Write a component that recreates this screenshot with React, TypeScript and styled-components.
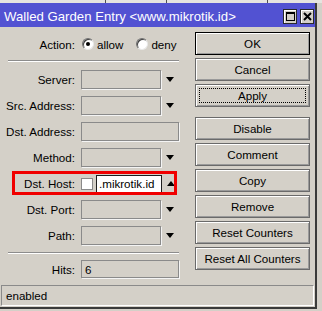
import React from "react";
import styled, { createGlobalStyle } from "styled-components";

const Global = createGlobalStyle`
  html, body { margin: 0; padding: 0; background: #d4d0c8; }
  #root { width: 322px; height: 311px; }
`;

const Page = styled.div`
  width: 322px;
  height: 311px;
  background: #d4d0c8;
  display: flex;
  flex-direction: column;
  overflow: hidden;
  font-family: "Liberation Sans", Arial, sans-serif;
  font-size: 11.6px;
  color: #000;
`;

const TopStrip = styled.div`
  height: 3px;
  display: flex;
  background: #e6e4e0;
`;

const StripCell = styled.div<{ $w: number }>`
  width: ${(p) => p.$w}px;
  border-right: 1px solid #505050;
  box-sizing: border-box;
`;

const Window = styled.div`
  width: 317px;
  height: 306px;
  box-sizing: border-box;
  border-right: 2px solid #3a3a3a;
  border-bottom: 2px solid #3a3a3a;
  display: flex;
  flex-direction: column;
`;

const TitleBar = styled.div`
  height: 24px;
  box-sizing: border-box;
  padding: 3px 1px 0 4px;
  background: #5252d2;
  color: #fff;
  font-size: 13.2px;
  display: flex;
  align-items: center;
  white-space: nowrap;
`;

const TitleText = styled.span`
  flex: 1;
`;

const TitleButtons = styled.div`
  display: flex;
  gap: 3px;
  align-self: flex-end;
  margin-bottom: 3px;
`;

const TitleButton = styled.div`
  width: 14px;
  height: 15px;
  box-sizing: border-box;
  background: #d4d0c8;
  border: 1px solid #2a2a2a;
  box-shadow: inset 1px 1px 0 #fff;
  display: flex;
  align-items: center;
  justify-content: center;
`;

const MaxGlyph = styled.div`
  width: 9px;
  height: 9px;
  box-sizing: border-box;
  border: 1px solid #000;
  border-top-width: 2px;
`;

const Body = styled.div`
  flex: 1;
  display: flex;
  flex-direction: column;
`;

const Main = styled.div`
  display: flex;
  padding-top: 5px;
`;

const Form = styled.div`
  width: 180px;
  display: flex;
  flex-direction: column;
`;

const Row = styled.div<{ $h?: number }>`
  position: relative;
  display: grid;
  grid-template-columns: 75px auto;
  column-gap: 6px;
  align-items: center;
  height: ${(p) => p.$h ?? 19}px;
`;

const Label = styled.span`
  text-align: right;
  white-space: nowrap;
`;

const Controls = styled.div`
  display: flex;
  align-items: center;
`;

const Radio = styled.span<{ $on?: boolean; $gap?: number }>`
  width: 12px;
  height: 12px;
  box-sizing: border-box;
  border-radius: 50%;
  background: #fff;
  border: 1px solid;
  border-color: #707070 #e8e8e8 #e8e8e8 #707070;
  box-shadow: inset 1px 1px 0 #404040;
  margin-left: ${(p) => p.$gap ?? 1}px;
  margin-right: 3px;
  display: flex;
  align-items: center;
  justify-content: center;
  &::after {
    content: "";
    width: 4px;
    height: 4px;
    border-radius: 50%;
    background: ${(p) => (p.$on ? "#000" : "transparent")};
  }
`;

const Separator = styled.div<{ $top: number; $bottom: number }>`
  margin: ${(p) => p.$top}px 0 ${(p) => p.$bottom}px 8px;
  width: 171px;
  border-top: 1px solid #8c8c8c;
  border-bottom: 1px solid #fff;
`;

const Rows = styled.div`
  display: flex;
  flex-direction: column;
  gap: 7px;
`;

const Field = styled.div<{ $w: number; $h?: number }>`
  width: ${(p) => p.$w}px;
  height: ${(p) => p.$h ?? 19}px;
  box-sizing: border-box;
  border: 1px solid #8a8a8a;
  box-shadow: 1px 1px 0 #f4f4f4;
  padding-left: 3px;
  display: flex;
  align-items: center;
`;

const Arrow = styled.span<{ $up?: boolean }>`
  width: 0;
  height: 0;
  margin-left: 5px;
  border-left: 4.5px solid transparent;
  border-right: 4.5px solid transparent;
  ${(p) =>
    p.$up ? "border-bottom: 5px solid #000;" : "border-top: 5px solid #000;"}
`;

const Check = styled.span`
  width: 12px;
  height: 12px;
  box-sizing: border-box;
  background: #fff;
  border: 1px solid #8a8a8a;
`;

const TextInput = styled.div`
  width: 66px;
  height: 18px;
  box-sizing: border-box;
  margin-left: 3px;
  background: #fff;
  border: 1px solid #1e1e1e;
  padding-left: 2px;
  display: flex;
  align-items: center;
  white-space: nowrap;
  overflow: hidden;
`;

const Highlight = styled.div`
  position: absolute;
  left: 12px;
  top: -3px;
  width: 165px;
  height: 24px;
  box-sizing: border-box;
  border: 3px solid #f00000;
  pointer-events: none;
`;

const Buttons = styled.div`
  margin-left: 15px;
  width: 115px;
  display: flex;
  flex-direction: column;
  gap: 3px;
`;

const ButtonGroup = styled.div`
  display: flex;
  flex-direction: column;
  gap: 3px;
  margin-top: 7px;
`;

const Button = styled.div<{ $default?: boolean; $focus?: boolean }>`
  position: relative;
  height: 23px;
  box-sizing: border-box;
  border: 1px solid ${(p) => (p.$default ? "#000" : "#6a6a6a")};
  box-shadow: inset 1px 1px 0 #fff, inset -1px -1px 0 #9a9a9a;
  display: flex;
  align-items: center;
  justify-content: center;
  white-space: nowrap;
  ${(p) =>
    p.$focus
      ? `&::after {
    content: "";
    position: absolute;
    inset: 3px;
    border: 1px dotted #000;
  }`
      : ""}
`;

const Status = styled.div`
  margin: 7px 1px 1px 1px;
  height: 21px;
  box-sizing: border-box;
  border: 1px solid;
  border-color: #8a8a8a #fff #fff #8a8a8a;
  padding-left: 4px;
  display: flex;
  align-items: center;
`;

const combos = ["Server:", "Src. Address:"];

export default function App() {
  return (
    <Page>
      <Global />
      <TopStrip>
        <StripCell $w={106} />
        <StripCell $w={61} />
        <StripCell $w={101} />
      </TopStrip>
      <Window>
        <TitleBar>
          <TitleText>Walled Garden Entry &lt;www.mikrotik.id&gt;</TitleText>
          <TitleButtons>
            <TitleButton>
              <MaxGlyph />
            </TitleButton>
            <TitleButton>
              <svg width="9" height="9" viewBox="0 0 9 9">
                <path d="M1 1 L8 8 M8 1 L1 8" stroke="#000" strokeWidth="2" />
              </svg>
            </TitleButton>
          </TitleButtons>
        </TitleBar>
        <Body>
          <Main>
            <Form>
              <Row $h={24}>
                <Label>Action:</Label>
                <Controls>
                  <Radio $on />
                  <span>allow</span>
                  <Radio $gap={13} />
                  <span>deny</span>
                </Controls>
              </Row>
              <Separator $top={4} $bottom={8} />
              <Rows>
                {combos.map((c) => (
                  <Row key={c}>
                    <Label>{c}</Label>
                    <Controls>
                      <Field $w={80} />
                      <Arrow />
                    </Controls>
                  </Row>
                ))}
                <Row>
                  <Label>Dst. Address:</Label>
                  <Field $w={98} />
                </Row>
                <Row>
                  <Label>Method:</Label>
                  <Controls>
                    <Field $w={80} />
                    <Arrow />
                  </Controls>
                </Row>
                <Row>
                  <Label>Dst. Host:</Label>
                  <Controls>
                    <Check />
                    <TextInput>.mikrotik.id</TextInput>
                    <Arrow $up />
                  </Controls>
                  <Highlight />
                </Row>
                <Row>
                  <Label>Dst. Port:</Label>
                  <Controls>
                    <Field $w={80} />
                    <Arrow />
                  </Controls>
                </Row>
                <Row>
                  <Label>Path:</Label>
                  <Controls>
                    <Field $w={80} />
                    <Arrow />
                  </Controls>
                </Row>
              </Rows>
              <Separator $top={7} $bottom={6} />
              <Row $h={18}>
                <Label>Hits:</Label>
                <Field $w={98} $h={18}>
                  6
                </Field>
              </Row>
            </Form>
            <Buttons>
              <Button $default>OK</Button>
              <Button>Cancel</Button>
              <Button $focus>Apply</Button>
              <ButtonGroup>
                <Button>Disable</Button>
                <Button>Comment</Button>
                <Button>Copy</Button>
                <Button>Remove</Button>
                <Button>Reset Counters</Button>
                <Button>Reset All Counters</Button>
              </ButtonGroup>
            </Buttons>
          </Main>
          <Status>enabled</Status>
        </Body>
      </Window>
    </Page>
  );
}
